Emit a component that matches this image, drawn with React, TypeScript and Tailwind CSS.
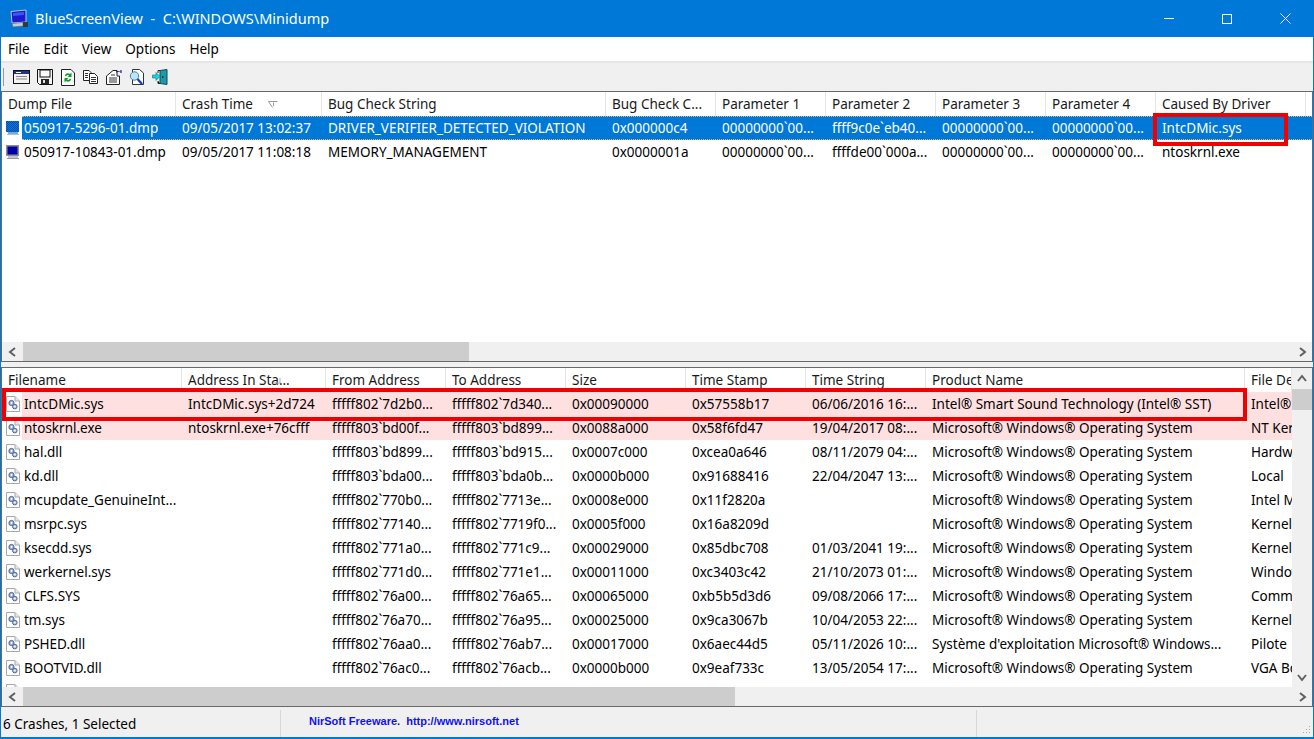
import React from "react";

const topCols = [174, 146, 284, 110, 110, 110, 110, 110, 150];
const topHeads = ["Dump File", "Crash Time", "Bug Check String", "Bug Check C...", "Parameter 1", "Parameter 2", "Parameter 3", "Parameter 4", "Caused By Driver"];
const topRows = [
  ["050917-5296-01.dmp", "09/05/2017 13:02:37", "DRIVER_VERIFIER_DETECTED_VIOLATION", "0x000000c4", "00000000`00...", "ffff9c0e`eb40...", "00000000`00...", "00000000`00...", "IntcDMic.sys"],
  ["050917-10843-01.dmp", "09/05/2017 11:08:18", "MEMORY_MANAGEMENT", "0x0000001a", "00000000`00...", "ffffde00`000a...", "00000000`00...", "00000000`00...", "ntoskrnl.exe"],
];
const botCols = [180, 144, 120, 120, 120, 120, 120, 319, 47];
const botHeads = ["Filename", "Address In Sta...", "From Address", "To Address", "Size", "Time Stamp", "Time String", "Product Name", "File Description"];
const MS = "Microsoft® Windows® Operating System";
const botRows = [
  ["IntcDMic.sys", "IntcDMic.sys+2d724", "fffff802`7d2b0...", "fffff802`7d340...", "0x00090000", "0x57558b17", "06/06/2016 16:...", "Intel® Smart Sound Technology (Intel® SST)", "Intel® Smart"],
  ["ntoskrnl.exe", "ntoskrnl.exe+76cfff", "fffff803`bd00f...", "fffff803`bd899...", "0x0088a000", "0x58f6fd47", "19/04/2017 08:...", MS, "NT Kernel"],
  ["hal.dll", "", "fffff803`bd899...", "fffff803`bd915...", "0x0007c000", "0xcea0a646", "08/11/2079 04:...", MS, "Hardware"],
  ["kd.dll", "", "fffff803`bda00...", "fffff803`bda0b...", "0x0000b000", "0x91688416", "22/04/2047 13:...", MS, "Local"],
  ["mcupdate_GenuineInt...", "", "fffff802`770b0...", "fffff802`7713e...", "0x0008e000", "0x11f2820a", "", MS, "Intel Micro"],
  ["msrpc.sys", "", "fffff802`77140...", "fffff802`7719f0...", "0x0005f000", "0x16a8209d", "", MS, "Kernel"],
  ["ksecdd.sys", "", "fffff802`771a0...", "fffff802`771c9...", "0x00029000", "0x85dbc708", "01/03/2041 19:...", MS, "Kernel"],
  ["werkernel.sys", "", "fffff802`771d0...", "fffff802`771e1...", "0x00011000", "0xc3403c42", "21/10/2073 01:...", MS, "Windows"],
  ["CLFS.SYS", "", "fffff802`76a00...", "fffff802`76a65...", "0x00065000", "0xb5b5d3d6", "09/08/2066 17:...", MS, "Common"],
  ["tm.sys", "", "fffff802`76a70...", "fffff802`76a95...", "0x00025000", "0x9ca3067b", "10/04/2053 22:...", MS, "Kernel"],
  ["PSHED.dll", "", "fffff802`76aa0...", "fffff802`76ab7...", "0x00017000", "0x6aec44d5", "05/11/2026 10:...", "Système d'exploitation Microsoft® Windows...", "Pilote"],
  ["BOOTVID.dll", "", "fffff802`76ac0...", "fffff802`76acb...", "0x0000b000", "0x9eaf733c", "13/05/2054 17:...", MS, "VGA Boot"],
];

function Monitor({ selected }: { selected?: boolean }) {
  return (
    <svg width="16" height="16" viewBox="0 0 16 16" className="shrink-0">
      <defs>
        <pattern id="dith" width="2" height="2" patternUnits="userSpaceOnUse">
          <rect width="2" height="2" fill="#0a4fb0" />
          <rect width="1" height="1" fill="#0078d7" />
          <rect x="1" y="1" width="1" height="1" fill="#0078d7" />
        </pattern>
      </defs>
      <rect x="1" y="1" width="13" height="11" fill={selected ? "url(#dith)" : "#8f8f8f"} />
      <rect x="2.5" y="2.5" width="10" height="8" fill={selected ? "url(#dith)" : "#0000a8"} />
      <rect x="3" y="12" width="10" height="2" fill={selected ? "#7aa9d8" : "#c4c4c4"} />
      <rect x="2" y="14" width="12" height="1" fill={selected ? "#a5c4e4" : "#9a9a9a"} />
    </svg>
  );
}

function PageGear() {
  return (
    <svg width="14" height="16" viewBox="0 0 14 16" className="shrink-0">
      <path d="M0.5 0.5H9L13.5 5V15.5H0.5Z" fill="#ffffff" stroke="#a8a8a8" />
      <path d="M9 0.5V5H13.5" fill="#e8e8e8" stroke="#a8a8a8" />
      <circle cx="5.5" cy="7" r="2.6" fill="#9fb6dc" stroke="#47628f" />
      <circle cx="5.5" cy="7" r="0.9" fill="#ffffff" />
      <circle cx="8.8" cy="10.6" r="2.3" fill="#b4c4e0" stroke="#47628f" />
      <circle cx="8.8" cy="10.6" r="0.8" fill="#ffffff" />
    </svg>
  );
}

function Chevron({ dir, dark }: { dir: "l" | "r" | "u" | "d"; dark?: boolean }) {
  const pts = { l: "7,1 2,5 7,9", r: "3,1 8,5 3,9", u: "1,7 5,2 9,7", d: "1,3 5,8 9,3" }[dir];
  return (
    <svg width="10" height="10" viewBox="0 0 10 10">
      <polyline points={pts} fill="none" stroke={dark ? "#505050" : "#606060"} strokeWidth="2" />
    </svg>
  );
}

function SortMark({ flip }: { flip?: boolean }) {
  return (
    <svg width="10" height="7" viewBox="0 0 10 7" className="absolute right-[43px] top-[9px]">
      {flip ? (
        <path d="M8 1V6H2" fill="none" stroke="#b0b0b0" />
      ) : (
        <path d="M0.5 0.5H9.5M0.5 0.5L4.5 6.5M5.5 1.5V5" fill="none" stroke="#9a9a9a" />
      )}
    </svg>
  );
}

function HScroll({ thumb }: { thumb: number }) {
  return (
    <div className="h-[19px] flex items-stretch bg-[#f0f0f0] shrink-0">
      <div className="w-[21px] flex items-center justify-center"><Chevron dir="l" /></div>
      <div className="bg-[#cdcdcd]" style={{ width: thumb }} />
      <div className="flex-1" />
      <div className="w-[21px] flex items-center justify-center"><Chevron dir="r" /></div>
    </div>
  );
}

function Header({ cols, heads, sort, flip }: { cols: number[]; heads: string[]; sort: number; flip?: boolean }) {
  return (
    <div className="h-[24px] flex items-center shrink-0 bg-white">
      {heads.map((h, i) => (
        <div key={i} style={{ width: cols[i] }} className="relative h-full shrink-0 flex items-center pl-[6px] border-r border-[#e5e5e5] whitespace-nowrap overflow-hidden text-[#1a1a1a]">
          {h}
          {i === sort && <SortMark flip={flip} />}
        </div>
      ))}
    </div>
  );
}

const TB = "w-[23px] h-[18px] flex items-center justify-center";

function Toolbar() {
  return (
    <div className="h-[28px] bg-[#f0f0f0] flex items-center pl-[2px] shrink-0">
      <div className="w-[1px] h-[18px] bg-[#9a9a9a] mr-[6px]" />
      <div className={TB}>
        <svg width="17" height="14" viewBox="0 0 17 14"><rect x="0.5" y="0.5" width="16" height="13" fill="#f2f2f2" stroke="#111" /><rect x="1" y="1" width="15" height="3" fill="#23338c" /><rect x="3" y="2" width="5" height="1" fill="#fff" /><path d="M3 6.5H14M3 9H14" stroke="#888" /></svg>
      </div>
      <div className={TB}>
        <svg width="16" height="16" viewBox="0 0 16 16"><path d="M0.5 0.5H15.5V15.5H2.5L0.5 13.5Z" fill="#f4f4f4" stroke="#111" /><rect x="3" y="1" width="10" height="7" fill="#fff" stroke="#111" /><rect x="4" y="10" width="8" height="5" fill="#222" /><rect x="6" y="11" width="2" height="3" fill="#ddd" /></svg>
      </div>
      <div className={TB}>
        <svg width="14" height="17" viewBox="0 0 14 17"><path d="M0.5 0.5H10L13.5 4V16.5H0.5Z" fill="#fdfdfd" stroke="#222" /><path d="M4 7C4 4.5 7 3.5 9 5L10.5 3.5V8H6.5L8 6.5C7 5.8 5.5 6 5.2 7.5Z" fill="#109a2c" /><path d="M10 10C10 12.5 7 13.5 5 12L3.5 13.5V9H7.5L6 10.5C7 11.2 8.5 11 8.8 9.5Z" fill="#109a2c" /></svg>
      </div>
      <div className={TB}>
        <svg width="15" height="14" viewBox="0 0 15 14"><path d="M0.5 0.5H6L8 2.5V10.5H0.5Z" fill="#fff" stroke="#222" /><path d="M6.5 3.5H11.5L14.5 6.5V13.5H6.5Z" fill="#fff" stroke="#222" /><path d="M2 3.5H5M2 5.5H5M2 7.5H5M8 7.5H13M8 9.5H13M8 11.5H13" stroke="#333" /></svg>
      </div>
      <div className={TB}>
        <svg width="16" height="15" viewBox="0 0 16 15"><path d="M0.5 6L7 0.5H11V6H13.5V14.5H0.5Z" fill="#fff" stroke="#222" /><path d="M3 8H11M3 10H11M3 12H11M5 5H9" stroke="#333" /><path d="M10 2L15 0.5M15 0V3" stroke="#1a1a8c" strokeWidth="1.2" /></svg>
      </div>
      <div className={TB}>
        <svg width="15" height="17" viewBox="0 0 15 17"><path d="M3.5 0.5H10.5L14.5 4V15.5H3.5Z" fill="#fff" stroke="#333" /><circle cx="5.5" cy="7" r="4.2" fill="#b8e6f4" stroke="#4d7fa8" /><path d="M8.5 10L13 15" stroke="#1b3fc4" strokeWidth="2.4" /></svg>
      </div>
      <div className={TB}>
        <svg width="16" height="16" viewBox="0 0 16 16"><path d="M8 1.5L15 0.5V15.5L8 14.5Z" fill="#1b9aa8" stroke="#0b4f58" /><path d="M6 1.5H8M6 1.5V4M6 12V14.5H8" stroke="#222" /><path d="M0.5 6H4V3.5L8 7.5L4 11.5V9H0.5Z" fill="#15d6e4" stroke="#0b6f78" strokeWidth="0.6" /><rect x="10" y="7" width="1.5" height="2" fill="#073a40" /></svg>
      </div>
    </div>
  );
}

export default function App() {
  return (
    <div className="w-[1314px] h-[739px] flex flex-col overflow-hidden bg-[#f0f0f0] border-x border-b-2 border-[#0078d7] text-[13.5px] text-black font-['Noto_Sans','Open_Sans',sans-serif]">
      <div className="-mx-px h-[37px] shrink-0 bg-[#0078d7] flex items-center text-white">
        <svg width="20" height="20" viewBox="0 0 20 20" className="ml-[9px] mr-[6px] shrink-0">
          <path d="M2 2.5L17 1V13L3 14Z" fill="#1a1ad0" stroke="#b8c4d8" />
          <path d="M4 4L15 3V6L4 7Z" fill="#3a58f0" />
          <path d="M3 14.5L14 13.5V17L4 18Z" fill="#c4ccd8" stroke="#5a6470" strokeWidth="0.6" />
          <rect x="14" y="13" width="5" height="5" fill="#303840" />
        </svg>
        <span className="text-[14.5px] whitespace-pre">BlueScreenView  -  C:\WINDOWS\Minidump</span>
        <div className="ml-auto flex items-center h-full">
          <div className="w-[58px] h-full flex items-center justify-center">
            <div className="w-[10px] h-px bg-white" />
          </div>
          <div className="w-[58px] h-full flex items-center justify-center">
            <div className="w-[10px] h-[10px] border border-white" />
          </div>
          <div className="w-[58px] h-full flex items-center justify-center">
            <svg width="11" height="11" viewBox="0 0 11 11"><path d="M0.5 0.5L10.5 10.5M10.5 0.5L0.5 10.5" stroke="#fff" /></svg>
          </div>
        </div>
      </div>
      <div className="h-[24px] shrink-0 bg-white flex items-center gap-[14px] pl-[7px]">
        <span>File</span><span>Edit</span><span>View</span><span>Options</span><span>Help</span>
      </div>
      <div className="h-[2px] shrink-0 bg-[#e6e6e6]" />
      <Toolbar />

      <div className="relative h-[271px] shrink-0 flex flex-col border-y border-l border-r border-[#696969] bg-white">
        <Header cols={topCols} heads={topHeads} sort={1} />
        <div className="h-[226px] overflow-hidden">
          {topRows.map((r, ri) => {
            const sel = ri === 0;
            return (
              <div key={ri} className="h-[24px] flex items-stretch whitespace-nowrap">
                <div className="w-[20px] shrink-0 flex items-center justify-center pl-[2px]"><Monitor selected={sel} /></div>
                <div className={sel ? "flex-1 flex items-center bg-[#0078d7] text-white border-y border-dotted border-[#e8b070]" : "flex-1 flex items-center"}>
                  {r.map((c, i) => (
                    <div key={i} style={{ width: i === 0 ? topCols[0] - 20 : topCols[i] }} className={i === 0 ? "pl-[2px] shrink-0 overflow-hidden" : "pl-[6px] shrink-0 overflow-hidden"}>{c}</div>
                  ))}
                </div>
              </div>
            );
          })}
        </div>
        <HScroll thumb={446} />
        <div className="absolute left-[1151px] top-[21px] w-[135px] h-[33px] border-4 border-[#f00000]" />
      </div>

      <div className="h-[5px] shrink-0 bg-[#f0f0f0]" />

      <div className="relative h-[340px] shrink-0 flex flex-col border-y border-x border-[#696969] bg-white">
        <div className="flex h-[319px] shrink-0">
          <div className="w-[1290px] shrink-0 flex flex-col overflow-hidden">
            <Header cols={botCols} heads={botHeads} sort={1} flip />
            <div className="h-[295px] overflow-hidden">
              {botRows.map((r, ri) => (
                <div key={ri} className="h-[24px] flex items-stretch whitespace-nowrap">
                  <div className="w-[20px] shrink-0 flex items-center justify-center pl-[2px]"><PageGear /></div>
                  <div className={ri < 2 ? "flex-1 flex items-center bg-[#ffe0e0]" : "flex-1 flex items-center"}>
                    {r.map((c, i) => (
                      <div key={i} style={{ width: i === 0 ? botCols[0] - 20 : botCols[i] }} className={i === 0 ? "pl-[2px] shrink-0 overflow-hidden" : "pl-[6px] shrink-0 overflow-hidden"}>{c}</div>
                    ))}
                  </div>
                </div>
              ))}
              <div className="h-[24px] flex items-center"><div className="w-[20px] flex justify-center pl-[2px]"><PageGear /></div></div>
            </div>
          </div>
          <div className="flex-1 flex flex-col bg-[#f0f0f0]">
            <div className="h-[21px] flex items-center justify-center"><Chevron dir="u" /></div>
            <div className="h-[21px] bg-[#cdcdcd]" />
            <div className="flex-1" />
            <div className="h-[21px] flex items-center justify-center"><Chevron dir="d" /></div>
          </div>
        </div>
        <HScroll thumb={712} />
        <div className="absolute left-0 top-[20px] w-[1245px] h-[33px] border-4 border-[#f00000]" />
      </div>

      <div className="flex-1 flex items-stretch bg-[#f0f0f0]">
        <div className="w-[280px] shrink-0 flex items-end pl-[2px] pb-[3px] border-r border-[#d8d8d8] mt-[3px]">6 Crashes, 1 Selected</div>
        <div className="w-[696px] shrink-0 pl-[28px] pt-[3px] border-r border-[#d8d8d8] mt-[3px] text-[11px] font-bold text-[#1010f0] font-['Liberation_Sans',sans-serif] whitespace-pre">NirSoft Freeware.  http://www.nirsoft.net</div>
        <div className="flex-1 flex items-end justify-end p-[2px]">
          <svg width="10" height="10" viewBox="0 0 10 10"><path d="M8 1h1v1H8zM5 4h1v1H5zM8 4h1v1H8zM2 7h1v1H2zM5 7h1v1H5zM8 7h1v1H8z" fill="#a8a8a8" /></svg>
        </div>
      </div>
    </div>
  );
}
